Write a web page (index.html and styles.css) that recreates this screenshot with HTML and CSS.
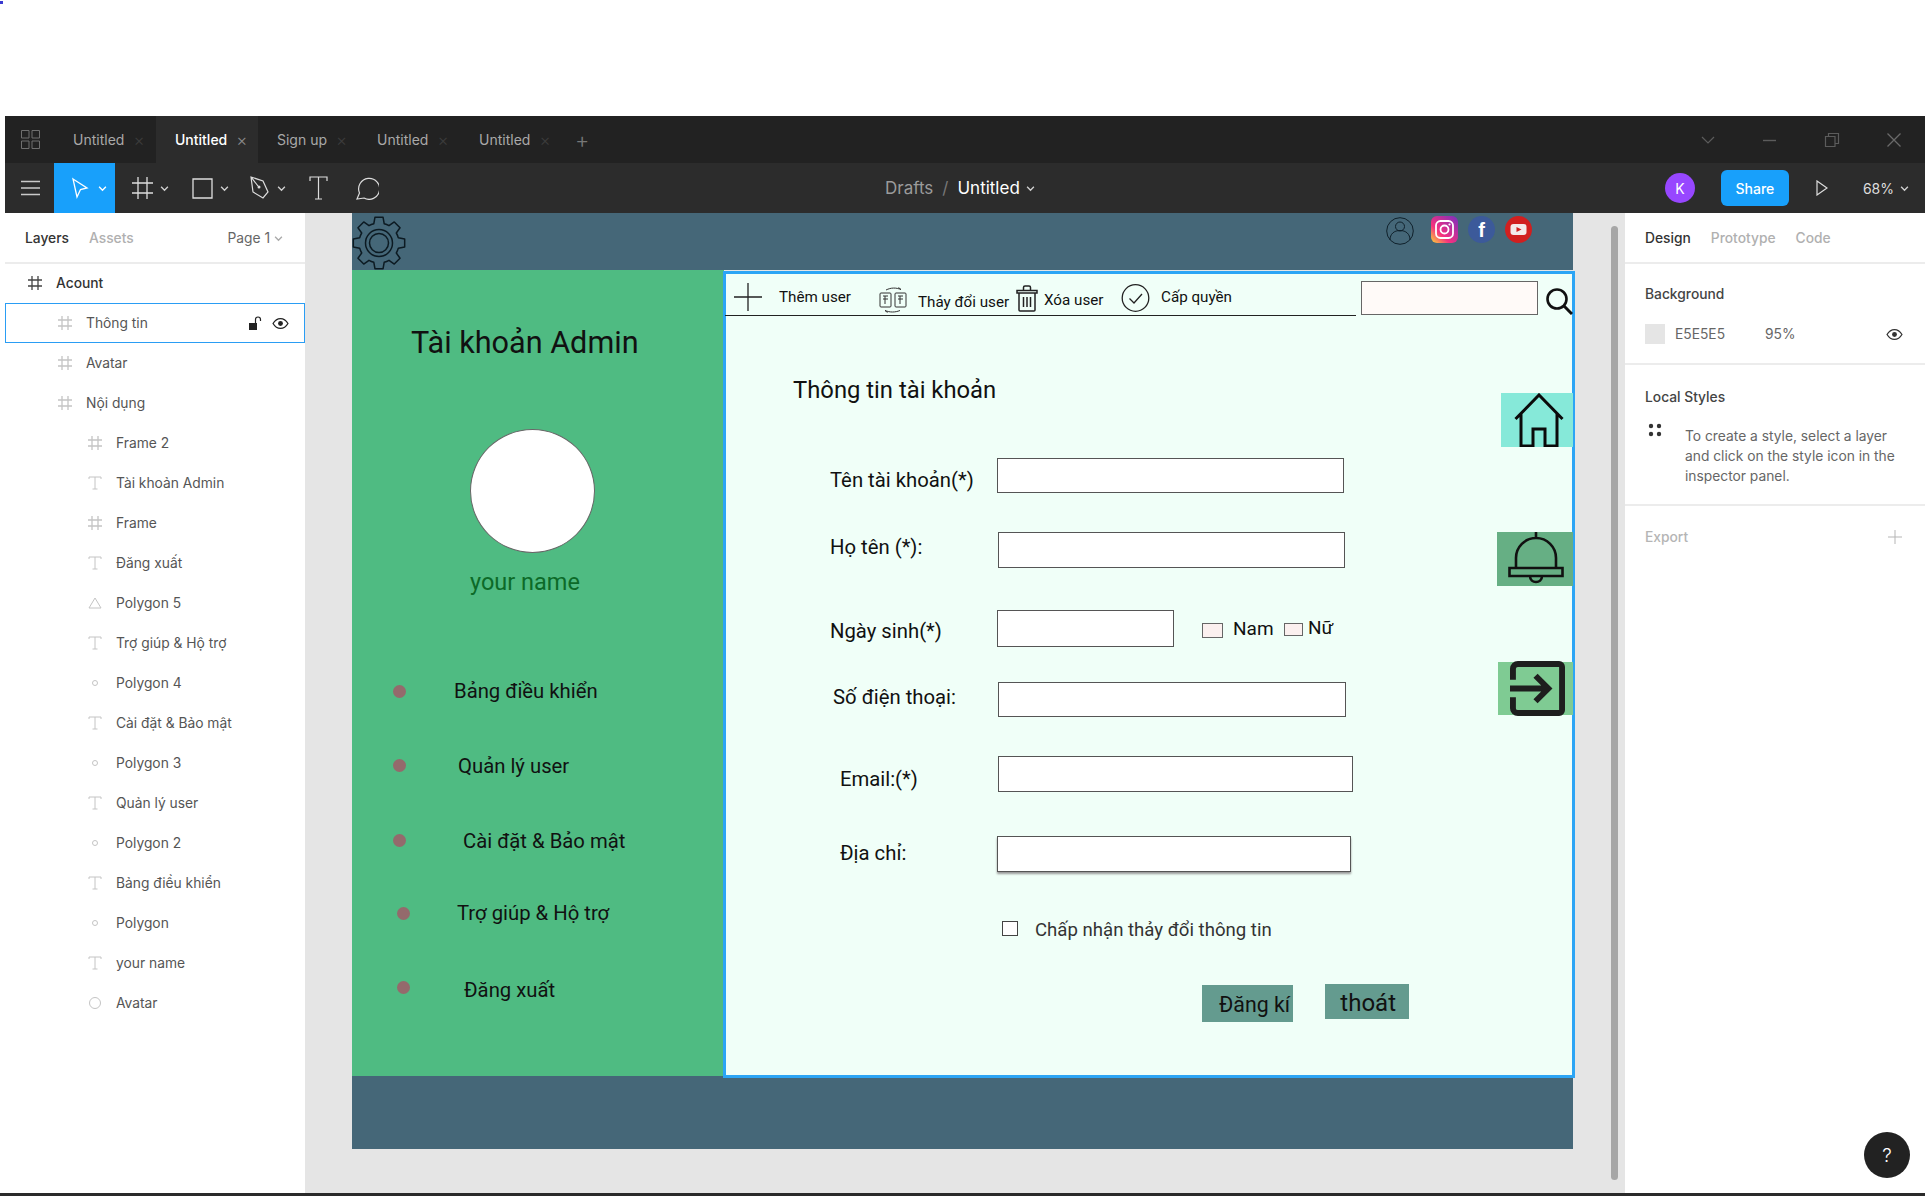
FILE: index.html
```html
<html>
<head>
<title>Untitled - Figma</title>
<meta charset="utf-8">
<link rel="stylesheet" href="styles.css">
</head>
<body>

<svg class="defs" width="0" height="0">
	<symbol id="i-frame" viewBox="0 0 16 16"><path d="M5 1v14M11 1v14M1 5h14M1 11h14" fill="none" stroke="currentColor" stroke-width="1.3"/></symbol>
	<symbol id="i-text" viewBox="0 0 16 16"><path d="M2 4V2h12v2M8 2v12M5.5 14h5" fill="none" stroke="currentColor" stroke-width="1"/></symbol>
	<symbol id="i-tri" viewBox="0 0 16 16"><path d="M8 3l6 10H2z" fill="none" stroke="currentColor" stroke-width="1"/></symbol>
	<symbol id="i-dot" viewBox="0 0 16 16"><circle cx="8" cy="8" r="2.5" fill="none" stroke="currentColor" stroke-width="1"/></symbol>
	<symbol id="i-circle" viewBox="0 0 16 16"><circle cx="8" cy="8" r="5.5" fill="none" stroke="currentColor" stroke-width="1"/></symbol>
	<symbol id="i-eye" viewBox="0 0 16 16"><path d="M1 8c2-3.4 4.400-4.600 7-4.600S13 4.600 15 8c-2 3.400-4.400 4.600-7 4.600S3 11.400 1 8z" fill="none" stroke="currentColor" stroke-width="1.2"/><circle cx="8" cy="8" r="2.300" fill="currentColor"/></symbol>
	<symbol id="i-chev" viewBox="0 0 8 8"><path d="M1 2.500l3 3 3-3" fill="none" stroke="currentColor" stroke-width="1.200"/></symbol>
</svg>

<div class="pixel"></div>

<div id="window">

	<div id="tabs">
		<svg class="tab-home" width="19" height="19" viewBox="0 0 19 19"><path d="M.5.5h7.500v7.500H.5zM11 .5h7.500v7.500H11zM.5 11h7.500v7.500H.5zM11 11h7.500v7.500H11z" fill="none" stroke="#6f6f6f"/></svg>
		<div class="tab">Untitled<span class="x">×</span></div>
		<div class="tab active">Untitled<span class="x">×</span></div>
		<div class="tab short">Sign up<span class="x">×</span></div>
		<div class="tab">Untitled<span class="x">×</span></div>
		<div class="tab">Untitled<span class="x">×</span></div>
		<div class="tab-plus">+</div>
		<div class="win-btns">
			<svg width="16" height="16" viewBox="0 0 16 16"><path d="M2 5l6 6 6-6" fill="none" stroke="#5c5c5c" stroke-width="1.200"/></svg>
			<svg width="16" height="16" viewBox="0 0 16 16"><path d="M1 8.500h13" stroke="#5c5c5c" stroke-width="1.400"/></svg>
			<svg width="16" height="16" viewBox="0 0 16 16"><path d="M1.500 4.500h9.500v10H1.500zM4.500 4.500V1.500h10v10H11" fill="none" stroke="#5c5c5c" stroke-width="1.200"/></svg>
			<svg width="16" height="16" viewBox="0 0 16 16"><path d="M1.500 1.500l13 13M14.500 1.500l-13 13" stroke="#6a6a6a" stroke-width="1.300"/></svg>
		</div>
	</div>

	<div id="toolbar">
		<div class="tools">
			<svg class="burger" width="19" height="16" viewBox="0 0 19 16"><path d="M0 1.500h19M0 8h19M0 14.500h19" stroke="#c9c9c9" stroke-width="1.300"/></svg>
			<div class="move">
				<svg width="18" height="22" viewBox="0 0 18 22"><path d="M2 2l14 9-6.500 1.500L6 20z" fill="none" stroke="#fff" stroke-width="1.300"/></svg>
				<svg class="chev" width="9" height="9"><use href="#i-chev"/></svg>
			</div>
			<div class="tool frame-tool">
				<svg width="21" height="24" viewBox="0 0 21 24"><path d="M6 1v22M15 1v22M0 7h21M0 17h21" fill="none" stroke="#ddd" stroke-width="1.300"/></svg>
				<svg class="chev" width="9" height="9"><use href="#i-chev"/></svg>
			</div>
			<div class="tool rect-tool">
				<svg width="21" height="21" viewBox="0 0 21 21"><path d="M1 1h19v19H1z" fill="none" stroke="#ddd" stroke-width="1.300"/></svg>
				<svg class="chev" width="9" height="9"><use href="#i-chev"/></svg>
			</div>
			<div class="tool pen-tool">
				<svg width="20" height="24" viewBox="0 0 20 24"><path d="M1 1l12 4 5 11-5 6-10-6zM1 1l7 9" fill="none" stroke="#ddd" stroke-width="1.200"/><circle cx="9" cy="11" r="1.500" fill="#ddd"/></svg>
				<svg class="chev" width="9" height="9"><use href="#i-chev"/></svg>
			</div>
			<div class="tool text-tool">
				<svg width="19" height="24" viewBox="0 0 19 24"><path d="M1 5V1h17v4M9.500 1v22M6 23h7" fill="none" stroke="#ddd" stroke-width="1.200"/></svg>
			</div>
			<div class="tool">
				<svg width="23" height="24" viewBox="0 0 23 24"><path d="M1 23l2.500-6A10.500 10.500 0 1 1 8 22z" fill="none" stroke="#ddd" stroke-width="1.200"/></svg>
			</div>
		</div>
		<div class="doc-title">
			<span class="drafts">Drafts</span><span class="slash">/</span><span class="doc-name">Untitled</span>
			<svg class="chev" width="9" height="9"><use href="#i-chev"/></svg>
		</div>
		<div class="tool-right">
			<div class="user-badge">K</div>
			<div class="share">Share</div>
			<svg class="play" width="12" height="16" viewBox="0 0 12 16"><path d="M1 1l10 7-10 7z" fill="none" stroke="#ddd" stroke-width="1.200"/></svg>
			<div class="zoom-val">68%<svg class="chev" width="9" height="9"><use href="#i-chev"/></svg></div>
		</div>
	</div>

	<div id="main">

		<div id="layers">
			<div class="panel-head">
				<span class="on">Layers</span><span class="off">Assets</span>
				<span class="page">Page 1 <svg class="chev" width="9" height="9"><use href="#i-chev"/></svg></span>
			</div>
			<div class="row lv0"><svg class="li dark" width="16" height="16"><use href="#i-frame"/></svg><span class="strong">Acount</span></div>
			<div class="row lv1 picked"><svg class="li" width="16" height="16"><use href="#i-frame"/></svg>Thông tin
				<span class="row-tools">
					<svg width="13" height="15" viewBox="0 0 13 15"><path d="M0 7h8v7H0z" fill="#222"/><path d="M6.500 7V3.500a2.500 2.500 0 0 1 5 0V5" fill="none" stroke="#222" stroke-width="1.200"/></svg>
					<svg width="17" height="17"><use href="#i-eye"/></svg>
				</span>
			</div>
			<div class="row lv1"><svg class="li" width="16" height="16"><use href="#i-frame"/></svg>Avatar</div>
			<div class="row lv1"><svg class="li" width="16" height="16"><use href="#i-frame"/></svg>Nội dụng</div>
			<div class="row lv2"><svg class="li" width="16" height="16"><use href="#i-frame"/></svg>Frame 2</div>
			<div class="row lv2"><svg class="li" width="16" height="16"><use href="#i-text"/></svg>Tài khoản Admin</div>
			<div class="row lv2"><svg class="li" width="16" height="16"><use href="#i-frame"/></svg>Frame</div>
			<div class="row lv2"><svg class="li" width="16" height="16"><use href="#i-text"/></svg>Đăng xuất</div>
			<div class="row lv2"><svg class="li" width="16" height="16"><use href="#i-tri"/></svg>Polygon 5</div>
			<div class="row lv2"><svg class="li" width="16" height="16"><use href="#i-text"/></svg>Trợ giúp &amp; Hộ trợ</div>
			<div class="row lv2"><svg class="li" width="16" height="16"><use href="#i-dot"/></svg>Polygon 4</div>
			<div class="row lv2"><svg class="li" width="16" height="16"><use href="#i-text"/></svg>Cài đặt &amp; Bảo mật</div>
			<div class="row lv2"><svg class="li" width="16" height="16"><use href="#i-dot"/></svg>Polygon 3</div>
			<div class="row lv2"><svg class="li" width="16" height="16"><use href="#i-text"/></svg>Quản lý user</div>
			<div class="row lv2"><svg class="li" width="16" height="16"><use href="#i-dot"/></svg>Polygon 2</div>
			<div class="row lv2"><svg class="li" width="16" height="16"><use href="#i-text"/></svg>Bảng điều khiển</div>
			<div class="row lv2"><svg class="li" width="16" height="16"><use href="#i-dot"/></svg>Polygon</div>
			<div class="row lv2"><svg class="li" width="16" height="16"><use href="#i-text"/></svg>your name</div>
			<div class="row lv2"><svg class="li" width="16" height="16"><use href="#i-circle"/></svg>Avatar</div>
		</div>

		<!-- canvas: everything in here sits on the free design surface -->
		<div id="canvas">
			<div id="artboard">
				<div class="a-top"></div>
				<div class="a-side"></div>
				<div class="a-bottom"></div>
				<div class="a-content"></div>

				<svg class="gear" width="54" height="54" viewBox="0 0 54 54"><path d="M21.820 7.680L22.930 1.320H31.070L32.180 7.680A20 20 0 0 1 37 9.680L42.280 5.970 48.030 11.720 44.320 17A20 20 0 0 1 46.320 21.820L52.680 22.930V31.070L46.320 32.180A20 20 0 0 1 44.320 37L48.030 42.280 42.280 48.030 37 44.320A20 20 0 0 1 32.180 46.320L31.070 52.680H22.930L21.820 46.320A20 20 0 0 1 17 44.320L11.720 48.030 5.970 42.280 9.680 37A20 20 0 0 1 7.680 32.180L1.320 31.070V22.930L7.680 21.820A20 20 0 0 1 9.680 17L5.970 11.720 11.720 5.970 17 9.680A20 20 0 0 1 21.820 7.680Z" fill="none" stroke="#0c1a22" stroke-width="1.500" stroke-linejoin="round"/><circle cx="27" cy="27" r="13.500" fill="none" stroke="#0c1a22" stroke-width="1.500"/><circle cx="27" cy="27" r="9.500" fill="none" stroke="#0c1a22" stroke-width="1.500"/></svg>

				<svg class="ic-user" width="28" height="28" viewBox="0 0 28 28"><circle cx="14" cy="14" r="13.300" fill="none" stroke="#10212b" stroke-width="1"/><circle cx="14" cy="9.500" r="4.500" fill="none" stroke="#10212b" stroke-width="1"/><path d="M4 23c0-6 4-9.500 10-9.500S24 17 24 23" fill="none" stroke="#10212b" stroke-width="1"/></svg>
				<svg class="ic-insta" width="27" height="27" viewBox="0 0 27 27">
					<defs><linearGradient id="ig" x1="0" y1="1" x2="1" y2="0"><stop offset="0" stop-color="#fdd835"/><stop offset=".35" stop-color="#f5317f"/><stop offset="1" stop-color="#7b2fbf"/></linearGradient></defs>
					<rect width="27" height="27" rx="6" fill="url(#ig)"/><rect x="5" y="5" width="17" height="17" rx="4.500" fill="none" stroke="#fff" stroke-width="1.800"/><circle cx="13.500" cy="13.500" r="4" fill="none" stroke="#fff" stroke-width="1.800"/><circle cx="18.500" cy="8.500" r="1.100" fill="#fff"/>
				</svg>
				<svg class="ic-fb" width="27" height="27" viewBox="0 0 27 27"><circle cx="13.500" cy="13.500" r="13.500" fill="#3c5a9a"/><text x="13.500" y="21" text-anchor="middle" class="fb-f">f</text></svg>
				<svg class="ic-yt" width="27" height="27" viewBox="0 0 27 27"><circle cx="13.500" cy="13.500" r="13.500" fill="#d11f1f"/><rect x="5.500" y="8" width="16" height="11" rx="3" fill="#f3eaea"/><path d="M11.500 11l5 2.500-5 2.500z" fill="#d11f1f"/></svg>

				<div class="txt side-title">Tài khoản Admin</div>
				<div class="avatar"></div>
				<div class="txt side-name">your name</div>

				<div class="bullet b1"></div><div class="txt side-item s1">Bảng điều khiển</div>
				<div class="bullet b2"></div><div class="txt side-item s2">Quản lý user</div>
				<div class="bullet b3"></div><div class="txt side-item s3">Cài đặt &amp; Bảo mật</div>
				<div class="bullet b4"></div><div class="txt side-item s4">Trợ giúp &amp; Hộ trợ</div>
				<div class="bullet b5"></div><div class="txt side-item s5">Đăng xuất</div>

				<svg class="ic-plus" width="28" height="28" viewBox="0 0 28 28"><path d="M14 0v28M0 14h28" stroke="#222" stroke-width="1.300"/></svg>
				<div class="txt bar-item m1">Thêm user</div>
				<svg class="ic-swap" width="28" height="26" viewBox="0 0 28 26"><g fill="none" stroke="#333" stroke-width="1"><rect x="1" y="6" width="11" height="14" rx="1"/><rect x="16" y="6" width="11" height="14" rx="1"/><path d="M4 9h5M4 12h5M6 9v8M19 9h5M19 12h5M21 9v8M7 3c5-2.500 10-2.500 15-.5M22 2.500l-2.500-2M21 23.500c-5 2-10 2-15 0M6 23.500l2.500 2"/></g></svg>
				<div class="txt bar-item m2">Thảy đổi user</div>
				<svg class="ic-trash" width="22" height="27" viewBox="0 0 22 27"><g fill="none" stroke="#222" stroke-width="1.500"><path d="M1 5.500h20V8H1zM7.500 5V2.500A1.500 1.500 0 0 1 9 1h4a1.500 1.500 0 0 1 1.500 1.500V5M3 8v17a1 1 0 0 0 1 1h14a1 1 0 0 0 1-1V8M7.500 12v10M11 12v10M14.500 12v10"/></g></svg>
				<div class="txt bar-item m3">Xóa user</div>
				<svg class="ic-check" width="29" height="28" viewBox="0 0 29 28"><circle cx="14.500" cy="14" r="13.300" fill="none" stroke="#222" stroke-width="1.300"/><path d="M8.500 14.500l4.500 4.500 8-9" fill="none" stroke="#222" stroke-width="1.300"/></svg>
				<div class="txt bar-item m4">Cấp quyền</div>
				<div class="bar-line"></div>
				<div class="search-box"></div>
				<svg class="ic-search" width="27" height="27" viewBox="0 0 27 27"><circle cx="11" cy="11" r="9.500" fill="none" stroke="#111" stroke-width="2.600"/><path d="M18 18l8 8" stroke="#111" stroke-width="3"/></svg>

				<div class="txt form-title">Thông tin tài khoản</div>

				<div class="txt lbl l1">Tên tài khoản(*)</div><div class="inp i1"></div>
				<div class="txt lbl l2">Họ tên (*):</div><div class="inp i2"></div>
				<div class="txt lbl l3">Ngày sinh(*)</div><div class="inp i3"></div>
				<div class="box-nam"></div><div class="txt lbl nam">Nam</div>
				<div class="box-nu"></div><div class="txt lbl nu">Nữ</div>
				<div class="txt lbl l4">Số điện thoại:</div><div class="inp i4"></div>
				<div class="txt lbl l5">Email:(*)</div><div class="inp i5"></div>
				<div class="txt lbl l6">Địa chỉ:</div><div class="inp i6"></div>

				<div class="accept-box"></div>
				<div class="txt accept">Chấp nhận thảy đổi thông tin</div>

				<div class="btn btn-reg">Đăng kí</div>
				<div class="btn btn-exit">thoát</div>

				<div class="tile t-home">
					<svg width="50" height="54" viewBox="0 0 50 54"><path d="M1.500 26L25 2l23.500 24M7 21v32h12V36h12v17h12V21" fill="none" stroke="#0a0a0a" stroke-width="3"/></svg>
				</div>
				<div class="tile t-bell">
					<svg width="56" height="54" viewBox="0 0 56 54"><g fill="none" stroke="#111" stroke-width="2.600"><path d="M28 0v6M8 36V26a20 20 0 0 1 40 0v10M1.500 36h53v8h-53zM22 44c0 8 12 8 12 0"/></g></svg>
				</div>
				<div class="tile t-exit">
					<svg width="55" height="55" viewBox="0 0 56 56"><g fill="none" stroke="#1e1e1e" stroke-width="6"><path d="M3 19V8a5 5 0 0 1 5-5h42a3 3 0 0 1 3 3v44a3 3 0 0 1-3 3H8a5 5 0 0 1-5-5V37M0 28h38M26 15l13 13-13 13"/></g></svg>
				</div>
			</div>
			<div class="scroll-thumb"></div>
		</div>

		<div id="props">
			<div class="panel-head">
				<span class="on">Design</span><span class="off">Prototype</span><span class="off">Code</span>
			</div>
			<div class="sect bg-sect">
				<div class="sect-title">Background</div>
				<div class="bg-row">
					<span class="swatch"></span><span class="hex">E5E5E5</span><span class="pct">95%</span>
					<svg class="bg-eye" width="17" height="17"><use href="#i-eye"/></svg>
				</div>
			</div>
			<div class="sect styles-sect">
				<div class="sect-title">Local Styles</div>
				<div class="styles-note">
					<svg width="14" height="14" viewBox="0 0 14 14"><circle cx="3" cy="3" r="2.200"/><circle cx="11" cy="3" r="2.200"/><circle cx="3" cy="11" r="2.200"/><circle cx="11" cy="11" r="2.200"/></svg>
					<p>To create a style, select a layer and click on the style icon in the inspector panel.</p>
				</div>
			</div>
			<div class="sect export-sect">
				<span class="sect-title mute">Export</span>
				<svg width="14" height="14" viewBox="0 0 14 14"><path d="M7 0v14M0 7h14" stroke="#b5b5b5" stroke-width="1"/></svg>
			</div>
		</div>

	</div>

	<div class="help">?</div>
</div>

<div class="bottom-line"></div>

</body>
</html>
```

FILE: styles.css
```css
* {
	box-sizing: border-box;
}

body {
	margin: 0;
	padding: 116px 0 0 5px;
	height: 1196px;
	overflow: hidden;
	background: #ffffff;
	font-family: Inter, "Noto Sans", sans-serif;
	font-size: 13.8px;
	color: #333;
	position: relative;
}

.defs {
	position: absolute;
}

.pixel {
	position: absolute;
	top: 1px;
	left: 0;
	width: 3px;
	height: 3px;
	background: #3a3ad0;
}

#window {
	position: relative;
	width: 1920px;
	height: 1077px;
	display: flex;
	flex-direction: column;
}

.bottom-line {
	height: 3px;
	margin-left: -5px;
	background: #2a2a2a;
}

/* ---------- tabs */

#tabs {
	height: 47px;
	display: flex;
	align-items: center;
	background: #222222;
	flex: none;
}

.tab-home {
	margin-left: 16px;
	margin-right: 14px;
	flex: none;
}

.tab {
	height: 47px;
	display: flex;
	align-items: center;
	padding-left: 19px;
	width: 102px;
	color: #a9a9a9;
	font-size: 14px;
}

.tab.short {
	width: 100px;
}

.tab .x {
	margin-left: 9px;
	font-size: 17px;
	font-weight: 300;
	color: #3c3c3c;
}

.tab.active {
	background: #2c2c2c;
	color: #ffffff;
	font-weight: 500;
}

.tab.active .x {
	color: #8a8a8a;
}

.tab-plus {
	margin-left: 13px;
	color: #777;
	font-size: 22px;
	font-weight: 300;
}

.win-btns {
	margin-left: auto;
	display: flex;
	gap: 46px;
	padding-right: 23px;
}

/* ---------- toolbar */

#toolbar {
	height: 50px;
	flex: none;
	background: #2c2c2c;
	display: flex;
	align-items: center;
	justify-content: space-between;
	color: #ddd;
}

.tools {
	display: flex;
	align-items: center;
	height: 50px;
	width: 600px;
}

.burger {
	margin-left: 16px;
	margin-right: 14px;
}

.chev {
	color: #d0d0d0;
	flex: none;
}

.move {
	width: 61px;
	height: 50px;
	background: #18a0fb;
	display: flex;
	align-items: center;
	padding-left: 17px;
	gap: 9px;
}

.move .chev {
	color: #fff;
}

.tool {
	display: flex;
	align-items: center;
	gap: 7px;
}

.frame-tool { margin-left: 17px; }
.rect-tool { margin-left: 23px; }
.pen-tool { margin-left: 21px; }
.text-tool { margin-left: 23px; }
.text-tool + .tool { margin-left: 28px; }

.doc-title {
	position: absolute;
	left: 880px;
	top: 47px;
	height: 50px;
	display: flex;
	align-items: center;
	font-size: 17px;
}

.drafts {
	color: #9b9b9b;
}

.slash {
	color: #777;
	margin: 0 9px;
}

.doc-name {
	color: #fff;
	margin-right: 6px;
}

.tool-right {
	display: flex;
	align-items: center;
	padding-right: 16px;
}

.user-badge {
	width: 30px;
	height: 30px;
	border-radius: 50%;
	background: #9747ff;
	color: #fff;
	display: flex;
	align-items: center;
	justify-content: center;
	font-size: 14px;
}

.share {
	margin-left: 26px;
	width: 68px;
	height: 36px;
	border-radius: 6px;
	background: #18a0fb;
	color: #fff;
	font-weight: 500;
	font-size: 14px;
	display: flex;
	align-items: center;
	justify-content: center;
}

.play {
	margin-left: 27px;
}

.zoom-val {
	margin-left: 35px;
	font-size: 14px;
	display: flex;
	align-items: center;
	gap: 6px;
}

/* ---------- side panels */

#main {
	flex: 1;
	display: flex;
	min-height: 0;
}

#layers {
	width: 300px;
	flex: none;
	background: #fff;
}

#props {
	width: 300px;
	flex: none;
	background: #fff;
}

.panel-head {
	height: 51px;
	margin-bottom: -1px;
	display: flex;
	align-items: center;
	padding: 0 20px;
	border-bottom: 2px solid #ececec;
	font-weight: 500;
}

.panel-head .on {
	color: #333;
}

.panel-head .off {
	color: #b0b0b0;
	margin-left: 20px;
}

.panel-head .page {
	margin-left: auto;
	margin-right: 2px;
	font-weight: 400;
	color: #666;
}

.panel-head .page .chev {
	color: #aaa;
}

.row {
	height: 40px;
	display: flex;
	align-items: center;
	color: #555;
	position: relative;
}

.row .li {
	color: #c4c4c4;
	flex: none;
	margin-right: 13px;
}

.row .li.dark {
	color: #444;
}

.lv0 { padding-left: 22px; }
.lv1 { padding-left: 52px; }
.lv2 { padding-left: 82px; }

.lv2 .li { margin-right: 13px; }

.strong {
	font-weight: 500;
	color: #333;
}

.picked {
	border: 1px solid #2a9df4;
	padding-left: 51px;
}

.row-tools {
	margin-left: auto;
	margin-right: 15px;
	display: flex;
	align-items: center;
	gap: 10px;
	color: #222;
}

.sect {
	border-bottom: 2px solid #ececec;
	padding: 0 20px;
}

.sect-title {
	font-weight: 500;
	color: #444;
}

.bg-sect {
	height: 102px;
	padding-top: 23px;
}

.bg-row {
	display: flex;
	align-items: center;
	margin-top: 22px;
	color: #666;
}

.swatch {
	width: 20px;
	height: 20px;
	background: #e5e5e5;
}

.hex {
	margin-left: 10px;
	width: 90px;
}

.bg-eye {
	margin-left: auto;
	margin-right: 2px;
	color: #333;
}

.styles-sect {
	height: 141px;
	padding-top: 24px;
}

.styles-note {
	display: flex;
	margin-top: 18px;
}

.styles-note svg {
	flex: none;
	margin: 0 23px 0 3px;
	fill: #333;
}

.styles-note p {
	margin: 3px 0 0;
	line-height: 20px;
	color: #666;
}

.export-sect {
	border: none;
	display: flex;
	align-items: center;
	justify-content: space-between;
	padding: 23px 23px 0 20px;
}

.mute {
	color: #b5b5b5;
}

.help {
	position: absolute;
	right: 15px;
	top: 1016px;
	width: 46px;
	height: 46px;
	border-radius: 50%;
	background: #222;
	color: #fff;
	font-size: 19px;
	font-weight: 300;
	display: flex;
	align-items: center;
	justify-content: center;
}

/* ---------- canvas */

#canvas {
	flex: 1;
	position: relative;
	background: #e5e5e5;
	overflow: hidden;
}

.scroll-thumb {
	position: absolute;
	left: 1306px;
	top: 13px;
	width: 7px;
	height: 954px;
	border-radius: 4px;
	background: #a6a6a6;
}

/* artboard origin sits at 352,213 on screen */
#artboard {
	position: absolute;
	left: 47px;
	top: 0;
	width: 1225px;
	height: 936px;
	font-family: Roboto, sans-serif;
	color: #111;
}

.a-top, .a-side, .a-bottom, .a-content {
	position: absolute;
}

.a-top {
	left: 0;
	top: 0;
	width: 1221px;
	height: 57px;
	background: #456778;
}

.a-side {
	left: 0;
	top: 57px;
	width: 372px;
	height: 806px;
	background: #4fbb82;
}

.a-bottom {
	left: 0;
	top: 863px;
	width: 1221px;
	height: 73px;
	background: #456778;
}

.a-content {
	left: 371px;
	top: 58px;
	width: 852px;
	height: 807px;
	background: #f0fff8;
	border: 3px solid #2ca5f5;
}

.gear, .ic-user, .ic-insta, .ic-fb, .ic-yt, .ic-plus, .ic-swap, .ic-trash, .ic-check, .ic-search {
	position: absolute;
}

.gear { left: 0; top: 3px; }
.ic-user { left: 1034px; top: 4px; }
.ic-insta { left: 1079px; top: 3px; }
.ic-fb { left: 1116px; top: 3px; }
.ic-yt { left: 1153px; top: 3px; }

.fb-f {
	font-family: "Liberation Sans", sans-serif;
	font-weight: 700;
	font-size: 20px;
	fill: #fff;
}

.txt {
	position: absolute;
	line-height: 30px;
	height: 30px;
	white-space: nowrap;
	margin-top: 1px;
}

.side-title { left: 59px; top: 114px; font-size: 30.600px; }

.avatar {
	position: absolute;
	left: 118px;
	top: 216px;
	width: 125px;
	height: 124px;
	border-radius: 50%;
	background: #fff;
	border: 1px solid #666;
}

.side-name { left: 118px; top: 353px; font-size: 23.500px; color: #0c6a28; }

.bullet {
	position: absolute;
	width: 13px;
	height: 13px;
	border-radius: 50%;
	background: #946a6c;
}

.b1 { left: 41px; top: 472px; }
.b2 { left: 41px; top: 546px; }
.b3 { left: 41px; top: 621px; }
.b4 { left: 45px; top: 694px; }
.b5 { left: 45px; top: 768px; }

.side-item { font-size: 20.300px; }

.s1 { left: 102px; top: 462px; }
.s2 { left: 106px; top: 537px; }
.s3 { left: 111px; top: 612px; }
.s4 { left: 105px; top: 684px; }
.s5 { left: 112px; top: 761px; }

.ic-plus { left: 382px; top: 70px; }
.ic-swap { left: 527px; top: 74px; }
.ic-trash { left: 664px; top: 72px; }
.ic-check { left: 769px; top: 71px; }
.ic-search { left: 1194px; top: 75px; }

.bar-item { font-size: 15.200px; }

.m1 { left: 427px; top: 68px; }
.m2 { left: 566px; top: 73px; }
.m3 { left: 692px; top: 71px; }
.m4 { left: 809px; top: 68px; }

.bar-line {
	position: absolute;
	left: 373px;
	top: 102px;
	width: 631px;
	height: 1px;
	background: #222;
}

.search-box {
	position: absolute;
	left: 1009px;
	top: 68px;
	width: 177px;
	height: 34px;
	background: #fffaf8;
	border: 1px solid #666;
}

.form-title { left: 441px; top: 161px; font-size: 23.800px; }

.lbl { font-size: 20.300px; }

.l1 { left: 478px; top: 251px; }
.l2 { left: 478px; top: 318px; }
.l3 { left: 478px; top: 402px; }
.l4 { left: 481px; top: 468px; }
.l5 { left: 488px; top: 550px; }
.l6 { left: 488px; top: 624px; }

.nam { left: 881px; top: 400px; font-size: 19px; }
.nu { left: 956px; top: 399px; font-size: 19px; }

.inp {
	position: absolute;
	background: #fff;
	border: 1px solid #555;
}

.i1 { left: 645px; top: 245px; width: 347px; height: 35px; }
.i2 { left: 646px; top: 319px; width: 347px; height: 36px; }
.i3 { left: 645px; top: 397px; width: 177px; height: 37px; }
.i4 { left: 646px; top: 469px; width: 348px; height: 35px; }
.i5 { left: 646px; top: 543px; width: 355px; height: 36px; }
.i6 { left: 645px; top: 623px; width: 354px; height: 36px; box-shadow: 0 2px 2px #999; }

.box-nam, .box-nu {
	position: absolute;
	background: #fbf0ef;
	border: 1px solid #666;
}

.box-nam { left: 850px; top: 410px; width: 21px; height: 15px; }
.box-nu { left: 932px; top: 410px; width: 19px; height: 13px; }

.accept-box {
	position: absolute;
	left: 650px;
	top: 708px;
	width: 16px;
	height: 15px;
	border: 1px solid #444;
	background: #fff;
}

.accept { left: 683px; top: 701px; font-size: 18.600px; color: #333; }

.btn {
	position: absolute;
	background: #649b8f;
	display: flex;
	align-items: center;
	justify-content: flex-end;
	line-height: 1;
}

.btn-reg { left: 850px; top: 772px; width: 91px; height: 37px; font-size: 21.300px; padding: 3px 3px 0 0; }
.btn-exit { left: 973px; top: 771px; width: 84px; height: 35px; font-size: 24px; padding: 3px 13px 0 0; }

.tile {
	position: absolute;
	display: flex;
	justify-content: center;
	align-items: flex-end;
	overflow: visible;
}

.t-home { left: 1149px; top: 180px; width: 72px; height: 54px; background: #86e9d9; padding-left: 4px; }
.t-bell { left: 1145px; top: 319px; width: 76px; height: 54px; background: #66af84; padding-left: 1px; }
.t-exit { left: 1146px; top: 449px; width: 75px; height: 53px; background: #7fcb93; align-items: center; padding-left: 4px; }
```
